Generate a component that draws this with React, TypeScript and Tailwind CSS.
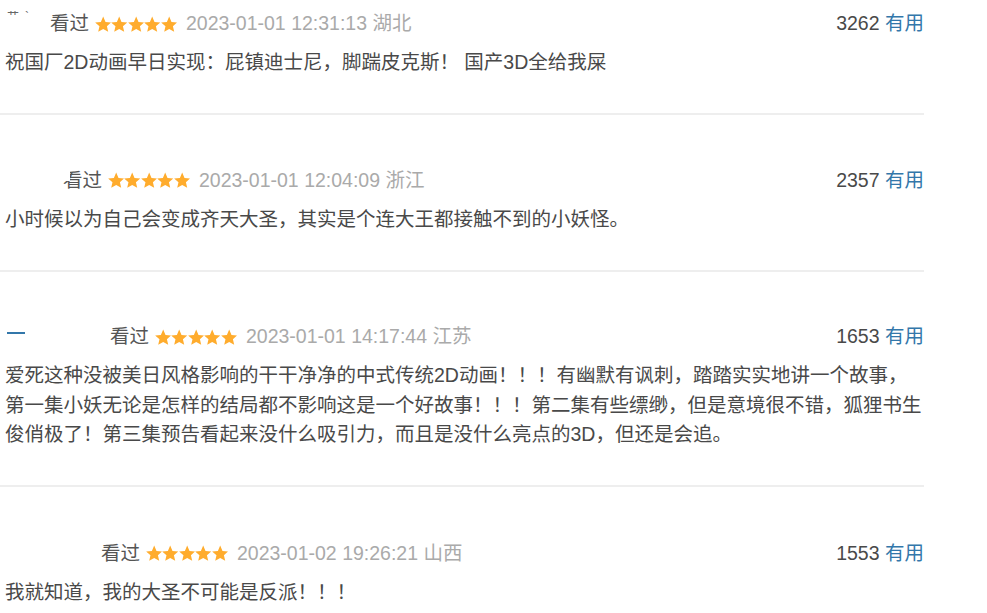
import React from "react";

type Comment = {
  nameWidth: number;
  date: string;
  region: string;
  votes: number;
  text: string;
  pad: string;
  mark?: "dash" | "tick";
  maskStatus?: boolean;
};

const COMMENTS: Comment[] = [
  {
    nameWidth: 45,
    date: "2023-01-01 12:31:13",
    region: "湖北",
    votes: 3262,
    text: "祝国厂2D动画早日实现：屁镇迪士尼，脚踹皮克斯！ 国产3D全给我屎",
    pad: "pt-[9px] pb-[35px]",
    mark: "tick",
  },
  {
    nameWidth: 58,
    date: "2023-01-01 12:04:09",
    region: "浙江",
    votes: 2357,
    text: "小时候以为自己会变成齐天大圣，其实是个连大王都接触不到的小妖怪。",
    pad: "pt-[51px] pb-[36px]",
    maskStatus: true,
  },
  {
    nameWidth: 105,
    date: "2023-01-01 14:17:44",
    region: "江苏",
    votes: 1653,
    text: "爱死这种没被美日风格影响的干干净净的中式传统2D动画！！！有幽默有讽刺，踏踏实实地讲一个故事，第一集小妖无论是怎样的结局都不影响这是一个好故事！！！第二集有些缥缈，但是意境很不错，狐狸书生俊俏极了！第三集预告看起来没什么吸引力，而且是没什么亮点的3D，但还是会追。",
    pad: "pt-[50px] pb-[35px]",
    mark: "dash",
  },
  {
    nameWidth: 96,
    date: "2023-01-02 19:26:21",
    region: "山西",
    votes: 1553,
    text: "我就知道，我的大圣不可能是反派！！！",
    pad: "pt-[52px] pb-[37px]",
  },
];

function Star() {
  return (
    <svg width="16.4" height="16.4" viewBox="1 1.2 22 21" className="shrink-0">
      <path
        d="M12 1.5l3.1 7.1 7.7.7-5.8 5.1 1.7 7.6L12 18.1 5.3 22l1.7-7.6L1.2 9.3l7.7-.7z"
        fill="#ffac2d"
      />
    </svg>
  );
}

export default function App() {
  return (
    <div
      className="w-[987px] h-[613px] overflow-hidden bg-white text-[19.5px] text-[#494949]"
      style={{ fontFamily: '"Liberation Sans", "Noto Sans CJK SC", sans-serif' }}
    >
      <div className="w-[924px]">
        {COMMENTS.map((c) => (
          <div key={c.date} className={`border-b-2 border-[#eeeeee] ${c.pad}`}>
            <div className="flex items-center h-[30px] pl-[5px]">
              <div className="shrink-0 relative h-full" style={{ width: c.nameWidth }}>
                {c.mark === "dash" && (
                  <div className="absolute left-[2px] top-[10px] w-[18px] h-[2px] bg-[#37a]" />
                )}
                {c.mark === "tick" && (
                  <div className="absolute left-[2px] top-[2px] text-[12px] leading-none text-[#666] tracking-[6px]">
                    艹`
                  </div>
                )}
              </div>
              <span className="relative text-[#555] leading-none">
                看过
                {c.maskStatus && (
                  <span className="absolute left-0 top-0 w-[7px] h-[55%] bg-white" />
                )}
              </span>
              <span className="flex ml-[6px]">
                <Star />
                <Star />
                <Star />
                <Star />
                <Star />
              </span>
              <span className="ml-[9px] text-[#aaaaaa]">
                {c.date} {c.region}
              </span>
              <span className="ml-auto">
                {c.votes} <span className="text-[#3377aa]">有用</span>
              </span>
            </div>
            <p className="mt-[9px] pl-[5px] leading-[29.5px]">{c.text}</p>
          </div>
        ))}
      </div>
    </div>
  );
}
